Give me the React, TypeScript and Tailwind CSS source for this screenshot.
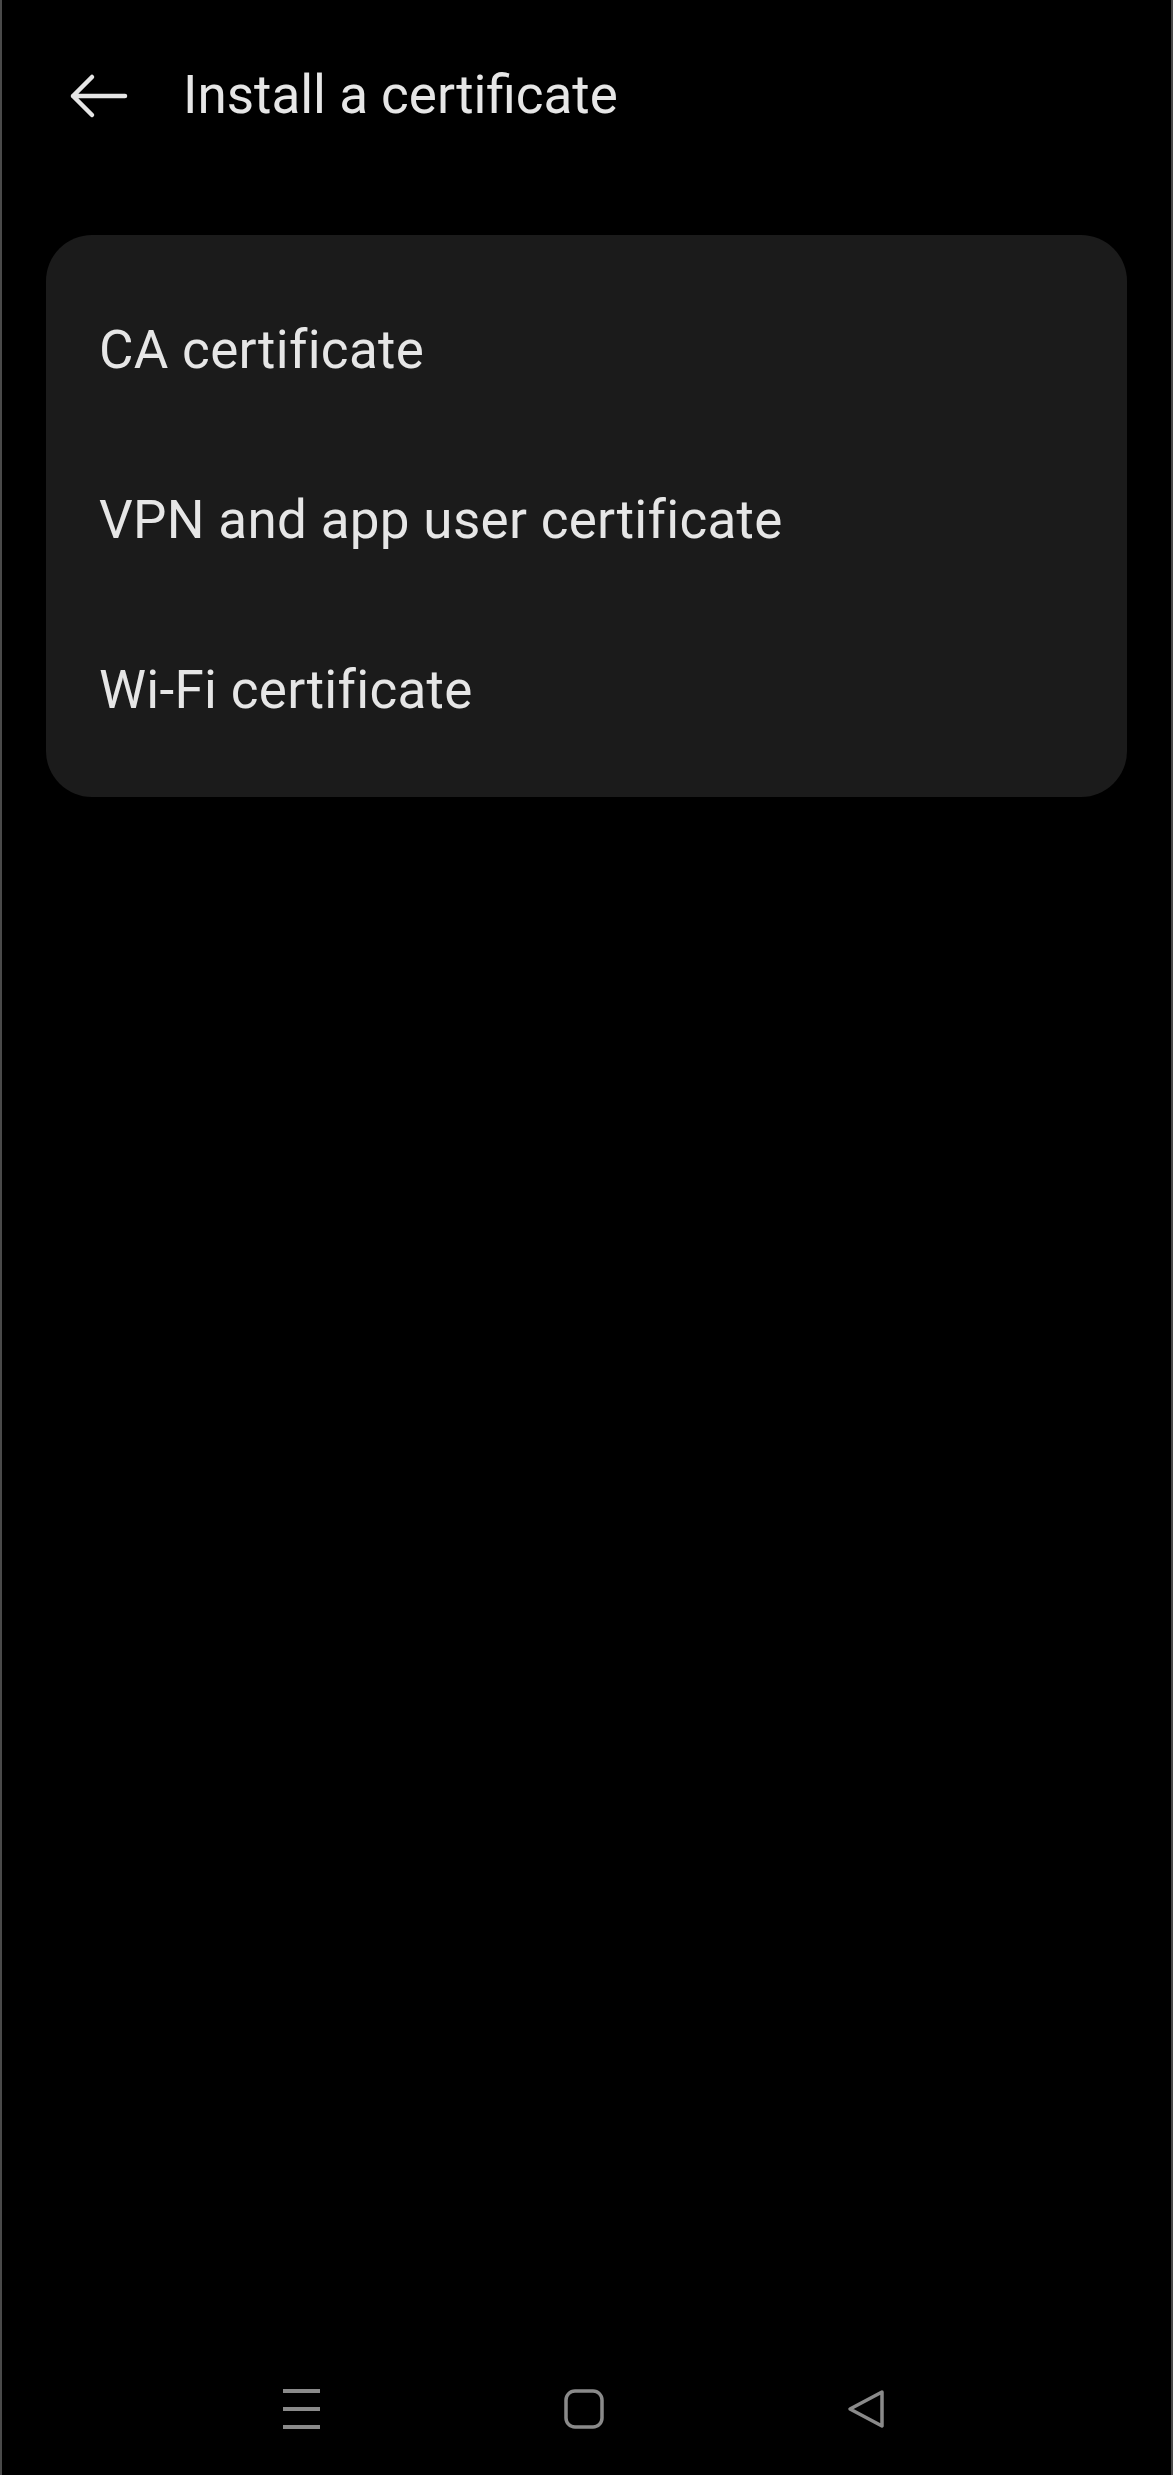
import React from 'react';

const items = ['CA certificate', 'VPN and app user certificate', 'Wi-Fi certificate'];

const BackArrow = () => (
  <svg width="60" height="46" viewBox="0 0 60 46" fill="none">
    <path
      d="M57 23H5M24 4L5 23L24 42"
      stroke="#e6e6e6"
      strokeWidth="4.5"
      strokeLinecap="round"
      strokeLinejoin="round"
    />
  </svg>
);

// Android-style bottom navigation
const NavBar = () => (
  <div className="h-[132px] flex items-center justify-center pr-[6px]">
    <div className="w-[282px] flex justify-center">
      <svg width="41" height="42" viewBox="0 0 41 42" fill="none">
        <path d="M2 3H39M2 21H39M2 39H39" stroke="#8a8a8a" strokeWidth="4" />
      </svg>
    </div>
    <div className="w-[282px] flex justify-center">
      <svg width="40" height="40" viewBox="0 0 40 40" fill="none">
        <rect x="2" y="2" width="36" height="36" rx="9" stroke="#8a8a8a" strokeWidth="3.5" />
      </svg>
    </div>
    <div className="w-[282px] flex justify-center">
      <svg width="40" height="42" viewBox="0 0 40 42" fill="none">
        <path
          d="M36 4L4 21L36 38Z"
          stroke="#8a8a8a"
          strokeWidth="3.5"
          strokeLinejoin="round"
        />
      </svg>
    </div>
  </div>
);

export default function App() {
  return (
    <div
      className="min-h-[2475px] bg-black flex flex-col border-x-2 border-[#4a4a4a]"
      style={{ fontFamily: 'Roboto, "Noto Sans", sans-serif' }}
    >
      {/* Header */}
      <div className="h-[186px] pt-[6px] flex items-center">
        <div className="ml-[66px] w-[115px] flex items-center">
          <BackArrow />
        </div>
        <h1 className="text-[53px] text-[#e6e6e6] font-normal">Install a certificate</h1>
      </div>

      {/* Options card */}
      <div className="mt-[49px] mx-[44px] bg-[#1b1b1b] rounded-[46px] pt-[31px] pb-[21px]">
        {items.map((item) => (
          <div key={item} className="h-[170px] flex items-center px-[53px]">
            <span className="text-[53px] text-[#e6e6e6] tracking-[0.3px]">{item}</span>
          </div>
        ))}
      </div>

      <div className="flex-1" />
      <NavBar />
    </div>
  );
}
